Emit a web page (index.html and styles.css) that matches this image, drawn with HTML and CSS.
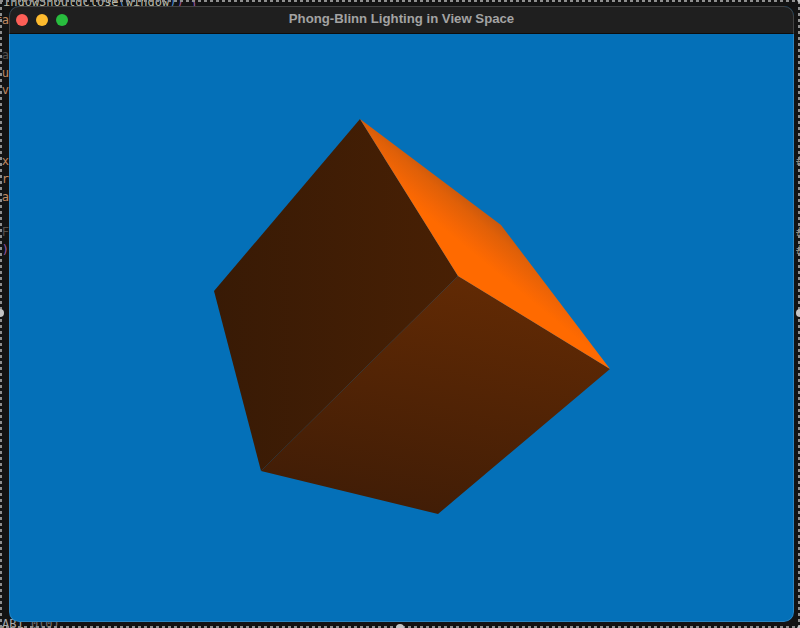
FILE: index.html
```html
<!DOCTYPE html>
<html lang="en">
<head>
    <meta charset="UTF-8">
    <meta name="viewport" content="width=device-width, initial-scale=1.0">
    <title>Phong-Blinn Lighting in View Space</title>
    <link rel="stylesheet" href="styles.css">
</head>
<body>
    <!-- editor text that peeks out behind the window -->
    <div class="code">
        <div class="line first">indowShouldClose<span class="blue">(</span>window<span class="blue">)</span><span class="purple">) {</span></div>
        <div class="line"><span class="gut">ra</span></div>
        <div class="line"></div>
        <div class="line"><span class="gut dim">a</span></div>
        <div class="line"><span class="gut">u</span></div>
        <div class="line"><span class="gut">v</span></div>
        <div class="line"></div>
        <div class="line"></div>
        <div class="line"></div>
        <div class="line"><span class="gut">x</span><span class="tail">#</span></div>
        <div class="line"><span class="gut">r</span></div>
        <div class="line"><span class="gut">a</span></div>
        <div class="line"></div>
        <div class="line"><span class="gut dim">F</span><span class="tail">#</span></div>
        <div class="line"><span class="gut purple">(</span><span class="tail">#</span></div>
    </div>
    <div class="code-bottom">AB1 <span class="dim-light">0(0)</span></div>

    <div class="select"></div>
    <span class="handle h-left"></span>
    <span class="handle h-right"></span>
    <span class="handle h-bottom"></span>
    <span class="handle h-top-right"></span>
    <span class="handle h-bottom-right"></span>

    <div class="window">
        <div class="titlebar">
            <div class="lights">
                <span class="light red"></span>
                <span class="light yellow"></span>
                <span class="light green"></span>
            </div>
            <div class="title">Phong-Blinn Lighting in View Space</div>
        </div>
        <svg class="canvas" viewBox="9 34 785 588" preserveAspectRatio="none">
            <defs>
                <linearGradient id="topFace" gradientUnits="userSpaceOnUse" x1="505" y1="220" x2="460" y2="275">
                    <stop offset="0" stop-color="#bd5510"/>
                    <stop offset="0.25" stop-color="#e06008"/>
                    <stop offset="0.5" stop-color="#f56604"/>
                    <stop offset="0.65" stop-color="#ff6a00"/>
                    <stop offset="1" stop-color="#ff6a00"/>
                </linearGradient>
                <linearGradient id="leftFace" gradientUnits="userSpaceOnUse" x1="214" y1="300" x2="458" y2="300">
                    <stop offset="0" stop-color="#381a05"/>
                    <stop offset="1" stop-color="#482004"/>
                </linearGradient>
                <linearGradient id="frontFace" gradientUnits="userSpaceOnUse" x1="470" y1="276" x2="420" y2="514">
                    <stop offset="0" stop-color="#622a04"/>
                    <stop offset="1" stop-color="#411d06"/>
                </linearGradient>
            </defs>
            <polygon points="360,119 458,276 261,471 214,291" fill="url(#leftFace)"/>
            <polygon points="458,276 610,369 438,514 261,471" fill="url(#frontFace)"/>
            <polygon points="360,119 501,225 610,369 458,276" fill="url(#topFace)"/>
        </svg>
    </div>
</body>
</html>
```

FILE: styles.css
```css
* {
    padding: 0;
    margin: 0;
    box-sizing: border-box;
}

body {
    position: relative;
    width: 800px;
    height: 628px;
    padding: 6px 6px 6px 9px;
    background-color: #131313;
    overflow: hidden;
    font-family: "Liberation Sans", Arial, sans-serif;
}

.code {
    position: absolute;
    left: 0;
    top: -6px;
    width: 800px;
    font-family: "DejaVu Sans Mono", "Liberation Mono", monospace;
    font-size: 12px;
    color: #c08a63;
}
.line {
    display: flex;
    justify-content: space-between;
    height: 17.7px;
    line-height: 17.7px;
    white-space: nowrap;
}
.first {
    display: block;
    padding-left: 3px;
    color: #b9b9a8;
}
.gut {
    width: 9px;
    overflow: hidden;
    direction: rtl;
}
.tail {
    width: 4px;
    overflow: hidden;
    color: #8a8a80;
}
.code-bottom {
    position: absolute;
    left: 2px;
    top: 616px;
    font-family: "DejaVu Sans Mono", "Liberation Mono", monospace;
    font-size: 12px;
    line-height: 16px;
    color: #a9a9a9;
    white-space: pre;
}
.dim-light {
    color: #6f6f6f;
}
.blue {
    color: #4f8fd0;
}
.purple {
    color: #9a5aa8;
}
.dim {
    color: #55504c;
}

/* screenshot selection marks: short dashes round the edge */
.select {
    position: absolute;
    inset: 0;
    background:
        repeating-linear-gradient(90deg, #8f8f8f 0 3px, transparent 3px 6px) top / 100% 2px no-repeat,
        repeating-linear-gradient(90deg, #8f8f8f 0 3px, transparent 3px 6px) bottom / 100% 2px no-repeat,
        repeating-linear-gradient(0deg, #8f8f8f 0 3px, transparent 3px 6px) left / 2px 100% no-repeat,
        repeating-linear-gradient(0deg, #8f8f8f 0 3px, transparent 3px 6px) right / 2px 100% no-repeat;
}

.handle {
    position: absolute;
    width: 8px;
    height: 8px;
    border-radius: 50%;
    background-color: #c4c4c4;
}
.h-left {
    left: -4px;
    top: 309px;
}
.h-right {
    right: -4px;
    top: 309px;
}
.h-bottom {
    left: 396px;
    bottom: -4px;
}
.h-top-right {
    right: -5px;
    top: -5px;
}
.h-bottom-right {
    right: -5px;
    bottom: -5px;
}

.window {
    position: relative;
    width: 785px;
    height: 616px;
    border-radius: 10px;
    overflow: hidden;
    background-color: #0470b8;
    display: flex;
    flex-direction: column;
}
/* thin light rim on top of the window contents */
.window::after {
    content: "";
    position: absolute;
    inset: 0;
    border-radius: 10px;
    border: 1px solid rgba(255, 255, 255, 0.16);
    pointer-events: none;
}

.titlebar {
    position: relative;
    display: flex;
    align-items: center;
    justify-content: center;
    height: 28px;
    padding-bottom: 2px;
    background-color: #1f1f1f;
    border-bottom: 1px solid #0d0d0d;
}

.lights {
    position: absolute;
    left: 7px;
    top: 8px;
    display: flex;
    gap: 8px;
}
.light {
    width: 12px;
    height: 12px;
    border-radius: 50%;
}
.red {
    background-color: #fe5f57;
}
.yellow {
    background-color: #febb2e;
}
.green {
    background-color: #28bd3e;
}

.title {
    font-size: 13.2px;
    font-weight: bold;
    color: #a3a3a3;
}

.canvas {
    display: block;
    flex: 1;
    width: 100%;
    min-height: 0;
}
```
